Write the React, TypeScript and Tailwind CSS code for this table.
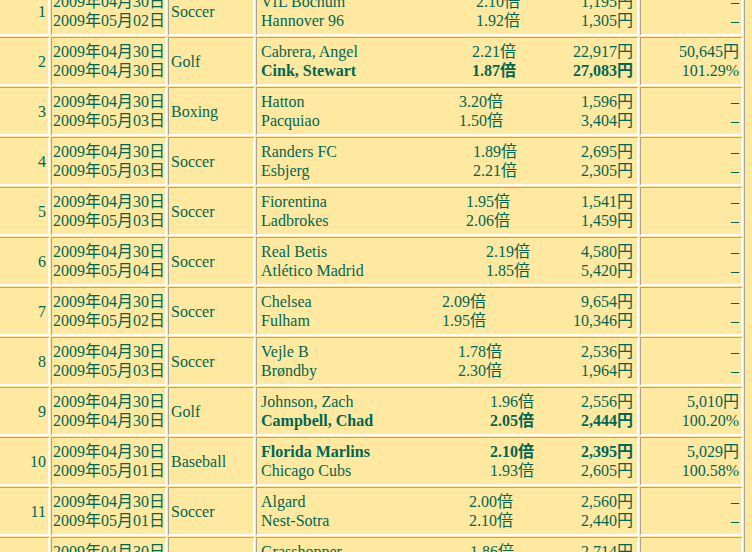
type Line = { name: string; odds: string; amt: string };

interface Bet {
  no: number;
  d1: string;
  d2: string;
  sport: string;
  a: Line;
  b: Line;
  win?: 'a' | 'b';
  result?: [string, string];
  amtW: string;
}

const bets: Bet[] = [
  { no: 1, d1: '2009年04月30日', d2: '2009年05月02日', sport: 'Soccer', a: { name: 'VfL Bochum', odds: '2.10倍', amt: '1,195円' }, b: { name: 'Hannover 96', odds: '1.92倍', amt: '1,305円' }, amtW: 'w-[113px]' },
  { no: 2, d1: '2009年04月30日', d2: '2009年04月30日', sport: 'Golf', a: { name: 'Cabrera, Angel', odds: '2.21倍', amt: '22,917円' }, b: { name: 'Cink, Stewart', odds: '1.87倍', amt: '27,083円' }, win: 'b', result: ['50,645円', '101.29%'], amtW: 'w-[117px]' },
  { no: 3, d1: '2009年04月30日', d2: '2009年05月03日', sport: 'Boxing', a: { name: 'Hatton', odds: '3.20倍', amt: '1,596円' }, b: { name: 'Pacquiao', odds: '1.50倍', amt: '3,404円' }, amtW: 'w-[130px]' },
  { no: 4, d1: '2009年04月30日', d2: '2009年05月03日', sport: 'Soccer', a: { name: 'Randers FC', odds: '1.89倍', amt: '2,695円' }, b: { name: 'Esbjerg', odds: '2.21倍', amt: '2,305円' }, amtW: 'w-[116px]' },
  { no: 5, d1: '2009年04月30日', d2: '2009年05月03日', sport: 'Soccer', a: { name: 'Fiorentina', odds: '1.95倍', amt: '1,541円' }, b: { name: 'Ladbrokes', odds: '2.06倍', amt: '1,459円' }, amtW: 'w-[123px]' },
  { no: 6, d1: '2009年04月30日', d2: '2009年05月04日', sport: 'Soccer', a: { name: 'Real Betis', odds: '2.19倍', amt: '4,580円' }, b: { name: 'Atlético Madrid', odds: '1.85倍', amt: '5,420円' }, amtW: 'w-[103px]' },
  { no: 7, d1: '2009年04月30日', d2: '2009年05月02日', sport: 'Soccer', a: { name: 'Chelsea', odds: '2.09倍', amt: '9,654円' }, b: { name: 'Fulham', odds: '1.95倍', amt: '10,346円' }, amtW: 'w-[147px]' },
  { no: 8, d1: '2009年04月30日', d2: '2009年05月03日', sport: 'Soccer', a: { name: 'Vejle B', odds: '1.78倍', amt: '2,536円' }, b: { name: 'Brøndby', odds: '2.30倍', amt: '1,964円' }, amtW: 'w-[131px]' },
  { no: 9, d1: '2009年04月30日', d2: '2009年04月30日', sport: 'Golf', a: { name: 'Johnson, Zach', odds: '1.96倍', amt: '2,556円' }, b: { name: 'Campbell, Chad', odds: '2.05倍', amt: '2,444円' }, win: 'b', result: ['5,010円', '100.20%'], amtW: 'w-[99px]' },
  { no: 10, d1: '2009年04月30日', d2: '2009年05月01日', sport: 'Baseball', a: { name: 'Florida Marlins', odds: '2.10倍', amt: '2,395円' }, b: { name: 'Chicago Cubs', odds: '1.93倍', amt: '2,605円' }, win: 'a', result: ['5,029円', '100.58%'], amtW: 'w-[99px]' },
  { no: 11, d1: '2009年04月30日', d2: '2009年05月01日', sport: 'Soccer', a: { name: 'Algard', odds: '2.00倍', amt: '2,560円' }, b: { name: 'Nest-Sotra', odds: '2.10倍', amt: '2,440円' }, amtW: 'w-[120px]' },
  { no: 12, d1: '2009年04月30日', d2: '2009年05月02日', sport: 'Soccer', a: { name: 'Grasshopper', odds: '1.86倍', amt: '2,714円' }, b: { name: 'FC Basel', odds: '2.12倍', amt: '2,286円' }, amtW: 'w-[119px]' },
];

const cell = 'border-t border-l border-t-[#aba38b] border-l-[#aba38b] border-r-2 border-b-2 border-r-white border-b-white py-[4px]';

function BetLine({ line, bold, amtW }: { line: Line; bold: boolean; amtW: string }) {
  return (
    <div className={`flex h-[19px] ${bold ? 'font-bold' : ''}`}>
      <div className="flex-1 whitespace-nowrap">{line.name}</div>
      <div className="whitespace-nowrap text-right">{line.odds}</div>
      <div className={`${amtW} shrink-0 whitespace-nowrap text-right`}>{line.amt}</div>
    </div>
  );
}

export default function App() {
  return (
    <div
      className="h-[552px] w-[752px] overflow-hidden bg-[#ffe9a1] text-[16px] leading-[19px] text-[#006652]"
      style={{ fontFamily: '"Liberation Serif", "Noto Sans CJK JP", serif' }}
    >
      <div className="-ml-[12px] -mt-[15px] flex w-[757px] flex-col gap-[1px] border-t border-l border-r border-t-white border-l-white border-r-[#aba38b] p-[1px]">
        {bets.map(bet => (
          <div key={bet.no} className="flex gap-[1px]">
            <div className={`${cell} flex w-[60px] shrink-0 items-center justify-end pr-[2px]`}>{bet.no}</div>
            <div className={`${cell} w-[116px] shrink-0 whitespace-nowrap pl-[1px]`}>
              <div className="h-[19px]">{bet.d1}</div>
              <div className="h-[19px]">{bet.d2}</div>
            </div>
            <div className={`${cell} flex w-[87px] shrink-0 items-center pl-[2px]`}>{bet.sport}</div>
            <div className={`${cell} w-[383px] shrink-0 pl-[4px] pr-[4px]`}>
              <BetLine line={bet.a} bold={bet.win === 'a'} amtW={bet.amtW} />
              <BetLine line={bet.b} bold={bet.win === 'b'} amtW={bet.amtW} />
            </div>
            <div className={`${cell} w-[103px] shrink-0 pr-[2px] text-right`}>
              <div className="h-[19px] whitespace-nowrap">{bet.result ? bet.result[0] : '–'}</div>
              <div className="h-[19px] whitespace-nowrap">{bet.result ? bet.result[1] : '–'}</div>
            </div>
          </div>
        ))}
      </div>
    </div>
  );
}
